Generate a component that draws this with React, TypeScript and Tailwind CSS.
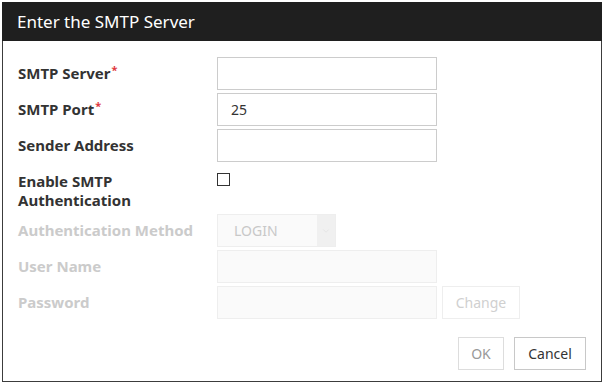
import React from "react";
import { ChevronDown } from "lucide-react";

const font = { fontFamily: '"Noto Sans", "Open Sans", sans-serif' };

function Label({ text, required, disabled }: { text: string; required?: boolean; disabled?: boolean }) {
  return (
    <div className={`flex items-center h-[33px] text-[15px] font-bold ${disabled ? "text-[#cbcbcb]" : "text-[#333]"}`}>
      {text}
      {required && <span className="text-[#e0383e] text-[11px] self-start mt-[5px] ml-[1px]">*</span>}
    </div>
  );
}

function TextInput({ value, disabled }: { value?: string; disabled?: boolean }) {
  return (
    <div
      className={`w-[220px] h-[33px] border flex items-center px-[13px] text-[14px] text-[#333] ${
        disabled ? "border-[#eeeeee] bg-[#fafafa]" : "border-[#cccccc] bg-white"
      }`}
    >
      {value}
    </div>
  );
}

export default function App() {
  return (
    <div className="w-[604px] h-[384px] bg-white p-[2px]" style={font}>
      <div className="w-[600px] h-[380px] border border-[#3c3c3c] flex flex-col">
        <div className="h-[39px] bg-[#1f1f1f] text-white text-[17px] flex items-center pl-[15px] -mx-px -mt-px">
          Enter the SMTP Server
        </div>
        <div className="flex-1 px-[15px] pt-[16px]">
          <div className="grid grid-cols-[199px_1fr] gap-y-[3px]">
            <Label text="SMTP Server" required />
            <TextInput />
            <Label text="SMTP Port" required />
            <TextInput value="25" />
            <Label text="Sender Address" />
            <TextInput />
            <div className="h-[46px] text-[15px] font-bold text-[#333] leading-[19px] pt-[7px]">
              Enable SMTP
              <br />
              Authentication
            </div>
            <div className="pt-[8px]">
              <div className="w-[13px] h-[13px] border border-[#333] bg-white" />
            </div>
            <Label text="Authentication Method" disabled />
            <div className="w-[119px] h-[33px] border border-[#eeeeee] bg-[#fafafa] flex">
              <div className="flex-1 flex items-center pl-[16px] text-[14px] text-[#c8c8c8]">LOGIN</div>
              <div className="w-[18px] bg-[#f0f0f0] flex items-center justify-center">
                <ChevronDown className="w-[10px] h-[10px] text-[#ddd]" strokeWidth={1.5} />
              </div>
            </div>
            <Label text="User Name" disabled />
            <TextInput disabled />
            <Label text="Password" disabled />
            <div className="flex gap-[5px]">
              <TextInput disabled />
              <div className="w-[78px] h-[33px] border border-[#eeeeee] bg-white flex items-center justify-center text-[14px] text-[#d0d0d0]">
                Change
              </div>
            </div>
          </div>
        </div>
        <div className="flex justify-end gap-[10px] px-[15px] pb-[11px]">
          <button className="w-[46px] h-[33px] border border-[#dddddd] bg-white text-[14px] text-[#999]">OK</button>
          <button className="w-[72px] h-[33px] border border-[#c8c8c8] bg-white text-[14px] text-[#333]">Cancel</button>
        </div>
      </div>
    </div>
  );
}
